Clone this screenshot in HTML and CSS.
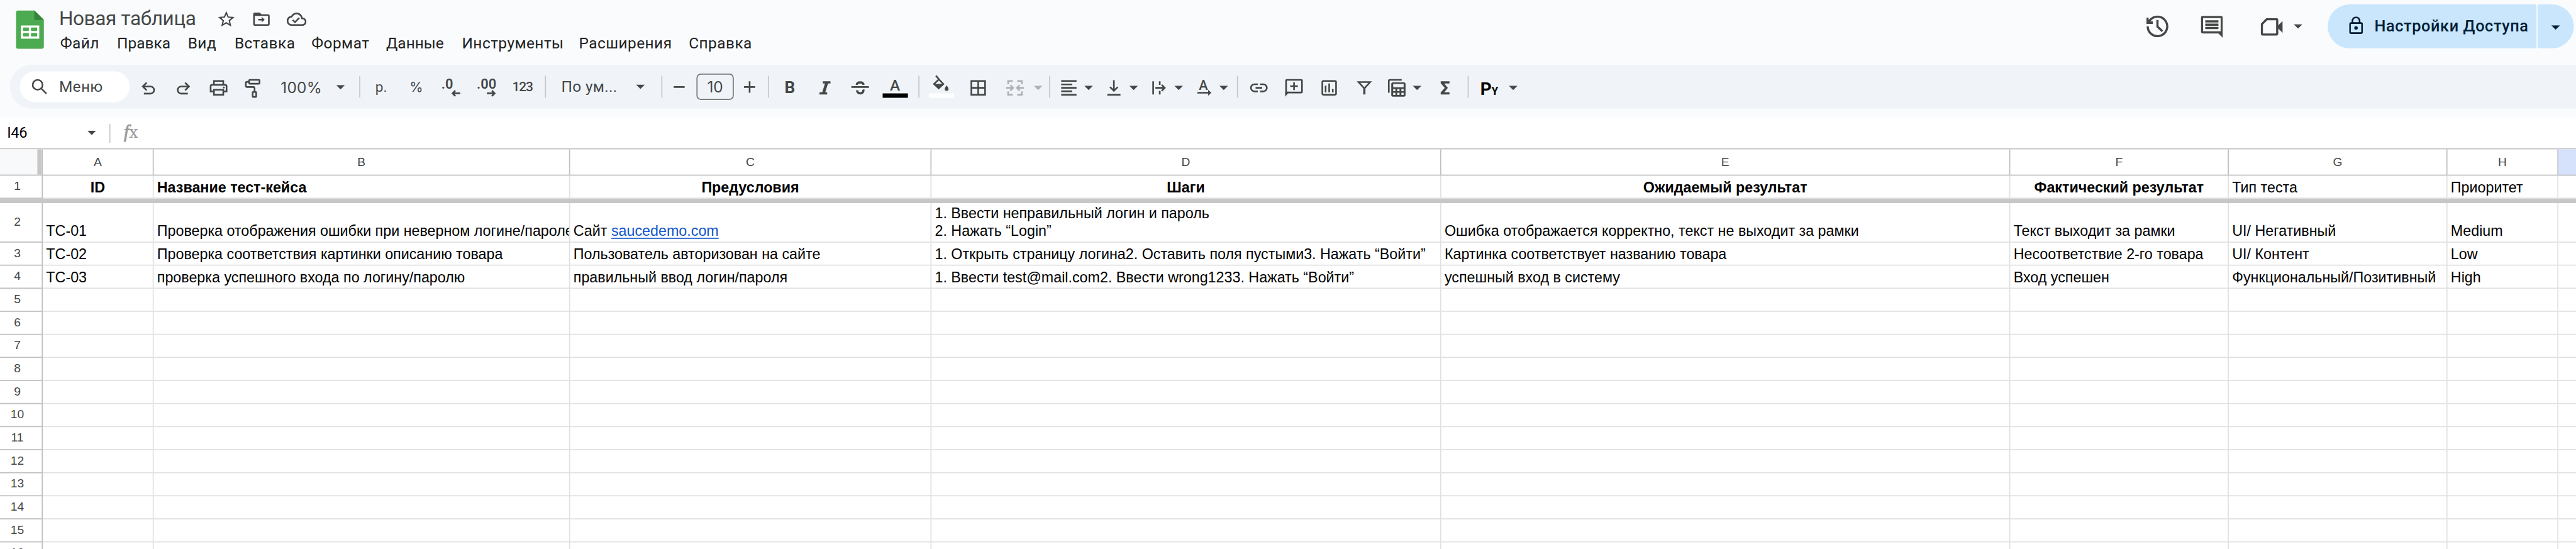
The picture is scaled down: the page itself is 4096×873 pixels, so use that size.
FILE: index.html
```html
<!DOCTYPE html>
<html lang="ru">
<head>
<meta charset="utf-8">
<title>Новая таблица</title>
<link rel="stylesheet" href="styles.css">
</head>
<body>
<div class="app">
  <header class="top">
    <svg class="logo" width="51" height="70" viewBox="0 0 51 70"><path fill="#4caa50" d="M4.500 0H33.500L51 17.500V65.500A4.500 4.500 0 0 1 46.500 70H4.500A4.500 4.500 0 0 1 0 65.500V4.500A4.500 4.500 0 0 1 4.500 0z"/><path fill="#37853b" d="M33.500 0L51 17.500H33.500z"/><path fill="#fff" fill-rule="evenodd" d="M9 27.500H42.500V51.500H9zM13 31V37.500H23.500V31zM27.500 31V37.500H38.500V31zM13 41V47.500H23.500V41zM27.500 41V47.500H38.500V41z"/></svg>
    <div class="heading">
      <div class="title-row">
        <h1 class="title">Новая таблица</h1>
        <svg class="star" width="36" height="36" viewBox="0 0 24 24"><path d="M22 9.240l-7.190-.62L12 2 9.190 8.630 2 9.240l5.460 4.730L5.820 21 12 17.270 18.180 21l-1.630-7.030L22 9.240zM12 15.400l-3.760 2.270 1-4.280-3.320-2.880 4.380-.38L12 6.100l1.710 4.040 4.380.38-3.320 2.880 1 4.280L12 15.400z"/></svg>
        <svg class="move" width="36" height="36" viewBox="0 0 24 24"><path d="M20 6h-8l-2-2H4C2.900 4 2 4.900 2 6v12c0 1.100.9 2 2 2h16c1.100 0 2-.9 2-2V8c0-1.100-.9-2-2-2zm0 12H4V8h16v10zM12.200 16l3.800-3.500L12.200 9v2.500H8.200v2h4z"/></svg>
        <svg class="cloud" width="36" height="36" viewBox="0 0 24 24"><path d="M19.350 10.040C18.670 6.590 15.640 4 12 4 9.110 4 6.610 5.640 5.350 8.040 2.340 8.360 0 10.910 0 14c0 3.310 2.690 6 6 6h13c2.760 0 5-2.240 5-5 0-2.640-2.050-4.780-4.650-4.960zM19 18H6c-2.210 0-4-1.790-4-4 0-2.050 1.530-3.760 3.560-3.970l1.070-.11.5-.95C8.080 7.140 9.940 6 12 6c2.620 0 4.880 1.860 5.390 4.430l.3 1.500 1.530.11c1.560.1 2.780 1.410 2.780 2.960 0 1.650-1.350 3-3 3zm-9-3.820l-2.090-2.090L6.500 13.500 10 17l6.010-6.010-1.410-1.410z"/></svg>
      </div>
      <nav class="menus"><span>Файл</span><span class="tight">Правка</span><span>Вид</span><span>Вставка</span><span>Формат</span><span class="tight">Данные</span><span>Инструменты</span><span>Расширения</span><span>Справка</span></nav>
    </div>
    <div class="actions">
      <svg class="history" width="40" height="40" viewBox="0 0 40 40"><path class="line" d="M2.200 20A17.800 17.800 0 1 0 6.500 8.500L3 12.500M20 8.500V20.500L29 29"/><path d="M0 4H4V11H11.500V15.500H0z"/></svg>
      <svg class="talk" width="40" height="40" viewBox="0 0 40 40"><path fill-rule="evenodd" d="M4 0H36A4 4 0 0 1 40 4V40L32 32H4A4 4 0 0 1 0 28V4A4 4 0 0 1 4 0zM4 4V28H36V4z"/><path d="M8 8H32V12H8zM8 14H32V18H8zM8 20H32V24H8z"/></svg>
      <svg class="camera" width="40" height="32" viewBox="0 0 40 32"><path class="line" d="M11 2H28A2 2 0 0 1 30 4V28A2 2 0 0 1 28 30H4A2 2 0 0 1 2 28V11z"/><path d="M31 14L40 5V27L31 18z"/></svg>
      <svg class="arrow" width="16" height="8" viewBox="0 0 16 8"><path d="M0 0H16L8 8z"/></svg>
      <div class="share">
        <div class="share-main">
          <svg width="25" height="32" viewBox="0 0 25 32"><path class="line" d="M6 11.500V8A6.500 6.500 0 0 1 19 8V11.500M3.500 12H21.500A2 2 0 0 1 23.500 14V28.300A2 2 0 0 1 21.500 30.300H3.500A2 2 0 0 1 1.500 28.300V14A2 2 0 0 1 3.500 12z"/><circle cx="12.500" cy="21" r="3.200"/></svg>
          <span>Настройки Доступа</span>
        </div>
        <div class="share-more"><svg width="16" height="8" viewBox="0 0 16 8"><path d="M0 0H16L8 8z"/></svg></div>
      </div>
    </div>
  </header>

  <div class="toolbar">
    <div class="search">
      <svg width="28" height="28" viewBox="0 0 28 28"><circle class="line" cx="10.500" cy="10.500" r="9"/><path class="line" d="M17 17L26.500 26.500"/></svg>
      <span>Меню</span>
    </div>
    <svg class="icon g10" viewBox="0 0 48 48"><path class="line" d="M21 14.500L14 21.500L21 28.500M14.500 21.500H28A6.500 6.500 0 0 1 28 34.500H16"/></svg>
    <svg class="icon g16" viewBox="0 0 48 48"><path class="line" d="M27 14.500L34 21.500L27 28.500M33.500 21.500H20A6.500 6.500 0 0 0 20 34.500H32"/></svg>
    <svg class="icon g16" viewBox="0 0 48 48"><path class="line" d="M15.500 18V11.500H32.500V18M15 30.500H9.500V21A3 3 0 0 1 12.500 18.500H35.500A3 3 0 0 1 38.500 21V30.500H33M15.500 27.500H32.500V36.500H15.500z"/><circle cx="33.500" cy="23.500" r="1.600"/></svg>
    <svg class="icon g16" viewBox="0 0 48 48"><rect class="line" x="15.500" y="9.500" width="19" height="7" rx="1.500"/><path class="line" d="M15 13H12A2.500 2.500 0 0 0 9.500 15.500V20A2.500 2.500 0 0 0 12 22.500H23A2.500 2.500 0 0 1 25.500 25V30"/><rect class="line" x="22" y="31.500" width="6.500" height="9" rx="1"/></svg>
    <span class="zoom-level">100%</span>
    <svg class="arrow zoom-arrow" width="16" height="8" viewBox="0 0 16 8"><path d="M0 0H16L8 8z"/></svg>
    <i class="rule g26"></i>
    <span class="glyph g14">р.</span>
    <span class="glyph percent g16">%</span>
    <svg class="icon g16" viewBox="0 0 48 48"><text class="num" x="5.500" y="26">.0</text><path class="line" d="M40 34H26.500M31 29L26 34L31 39"/></svg>
    <svg class="icon g16" viewBox="0 0 48 48"><text class="num" x="6" y="26">.00</text><path class="line" d="M24.500 34H38M33.500 29L38.500 34L33.500 39"/></svg>
    <span class="glyph digits g16">123</span>
    <i class="rule g16"></i>
    <span class="font-name">По ум...</span>
    <svg class="arrow font-arrow" width="16" height="8" viewBox="0 0 16 8"><path d="M0 0H16L8 8z"/></svg>
    <i class="rule g30"></i>
    <svg class="icon g7" viewBox="0 0 48 48"><path class="line" d="M13.500 22.500H33.500"/></svg>
    <span class="size-box">10</span>
    <svg class="icon g5" viewBox="0 0 48 48"><path class="line" d="M13.500 22.500H34M23.800 12V33"/></svg>
    <i class="rule g9"></i>
    <span class="glyph bold g14">B</span>
    <svg class="icon g16" viewBox="0 0 48 48"><path d="M20 12H34V16H29.500L24.500 32H28V36H14V32H19L24 16H20z"/></svg>
    <svg class="icon g16" viewBox="0 0 48 48"><path class="line thick" d="M17.800 18.500C18 15.500 20.500 14 24 14S30 15.500 30.200 18.500M18.500 28.500C18.500 32 20.500 34 24.500 34S30 31.500 30 28.500C30 28 29.900 27.500 29.700 27"/><path d="M8 20.800H40V24.200H8z"/></svg>
    <svg class="icon g16" viewBox="0 0 48 48"><text class="letter" x="23.500" y="29">A</text><path fill="#000" d="M1 34H47V42H1z"/></svg>
    <i class="rule g18"></i>
    <svg class="icon g16" viewBox="0 0 48 48"><path class="line" d="M14 2L20.500 9.500L27.500 17L19 25L10.500 17L19.500 8.500"/><path d="M10 17H28L19 26.500zM33.500 19.500C35.500 22.500 37 24.500 37 26A3.500 3.500 0 0 1 30 26C30 24.500 31.500 22.500 33.500 19.500z"/><path fill="#fff" d="M1 34H47V42H1z"/></svg>
    <svg class="icon g19" viewBox="0 0 48 48"><path class="line" d="M11.500 11.500H36.500V36.500H11.500zM24 11.500V36.500M11.500 24H36.500"/></svg>
    <svg class="icon g19 off" viewBox="0 0 48 48"><path class="line" d="M20 11.500H11.500V17.500M28 11.500H36.500V17.500M20 36.500H11.500V30.500M28 36.500H36.500V30.500M8 24H19.500M15.500 19L20.500 24L15.500 29M40 24H28.500M32.500 19L27.500 24L32.500 29"/></svg>
    <svg class="arrow g10 off" width="16" height="8" viewBox="0 0 16 8"><path d="M0 0H16L8 8z"/></svg>
    <i class="rule g12"></i>
    <svg class="icon g10" viewBox="0 0 48 48"><path class="line" d="M10 11.500H38M10 17.800H30M10 24H38M10 30.200H30M10 36.500H38"/></svg>
    <svg class="arrow g4" width="16" height="8" viewBox="0 0 16 8"><path d="M0 0H16L8 8z"/></svg>
    <svg class="icon g14" viewBox="0 0 48 48"><path class="line" d="M12 36.500H36M24 10V29M17 22.500L24 29.500L31 22.500"/></svg>
    <svg class="arrow g4" width="16" height="8" viewBox="0 0 16 8"><path d="M0 0H16L8 8z"/></svg>
    <svg class="icon g14" viewBox="0 0 48 48"><path class="line" d="M13.500 12V36M25.500 12V18.500M25.500 29.500V36M17.500 24H33M29 18.500L34.500 24L29 29.500"/></svg>
    <svg class="arrow g4" width="16" height="8" viewBox="0 0 16 8"><path d="M0 0H16L8 8z"/></svg>
    <svg class="icon g14" viewBox="0 0 48 48"><text class="letter light" x="23" y="28">A</text><path class="line" d="M12 33H35"/><path d="M31.500 27.500L37.500 33L31.500 38.500z"/></svg>
    <svg class="arrow g4" width="16" height="8" viewBox="0 0 16 8"><path d="M0 0H16L8 8z"/></svg>
    <i class="rule g16"></i>
    <svg class="icon g14" viewBox="0 0 48 48"><path class="line" d="M22 17.500H16A6.500 6.500 0 0 0 16 30.500H22M26 17.500H32A6.500 6.500 0 0 1 32 30.500H26M18 24H30"/></svg>
    <svg class="icon g16" viewBox="0 0 48 48"><path class="line" d="M9.500 36V11A1.500 1.500 0 0 1 11 9.500H37A1.500 1.500 0 0 1 38.500 11V31A1.500 1.500 0 0 1 37 32.500H12M24 14V28M17 21H31"/><path d="M8 40V31H15.500z"/></svg>
    <svg class="icon g16" viewBox="0 0 48 48"><rect class="line" x="11.500" y="11.500" width="25" height="25" rx="2"/><path class="line" d="M17.500 20V32M24 16V32M30.500 26V32"/></svg>
    <svg class="icon g16" viewBox="0 0 48 48"><path class="line" d="M13.500 13.500H34.500L24 25z"/><path d="M22 24H26V36H22z"/></svg>
    <svg class="icon g12" viewBox="0 0 48 48"><path class="line" d="M8.500 33V11.500A2 2 0 0 1 10.500 9.500H32"/><path fill-rule="evenodd" d="M16 14H36A3 3 0 0 1 39 17V37A3 3 0 0 1 36 40H16A3 3 0 0 1 13 37V17A3 3 0 0 1 16 14zM16.500 17V23H35.500V17zM16.500 26V30H20.500V26zM24 26V30H28V26zM31.500 26V30H35.500V26zM16.500 33V37H20.500V33zM24 33V37H28V33zM31.500 33V37H35.500V33z"/></svg>
    <svg class="arrow g4" width="16" height="8" viewBox="0 0 16 8"><path d="M0 0H16L8 8z"/></svg>
    <svg class="icon g19" viewBox="0 0 48 48"><path d="M16 12H32V16H22.500L29 24L22.500 32H32V36H16V32.500L23.500 24L16 15.500z"/></svg>
    <i class="rule g17"></i>
    <svg class="icon g15" viewBox="0 0 48 48"><text class="py" x="6" y="37">P</text><text class="py small" x="26.500" y="37">Y</text></svg>
    <svg class="arrow g10" width="16" height="8" viewBox="0 0 16 8"><path d="M0 0H16L8 8z"/></svg>
  </div>

  <div class="formula">
    <span class="cell-name">I46</span>
    <svg class="arrow" width="16" height="8" viewBox="0 0 16 8"><path d="M0 0H16L8 8z"/></svg>
    <i class="rule"></i>
    <span class="fx"><em>f</em>x</span>
  </div>

  <main class="sheet">
    <div class="row columns"><div class="corner"></div><div>A</div><div>B</div><div>C</div><div>D</div><div>E</div><div>F</div><div>G</div><div>H</div><div class="active"></div></div>
    <div class="row heads"><div class="no">1</div><div class="mid">ID</div><div class="strong">Название тест-кейса</div><div class="mid">Предусловия</div><div class="mid">Шаги</div><div class="mid">Ожидаемый результат</div><div class="mid">Фактический результат</div><div>Тип теста</div><div>Приоритет</div><div></div></div>
    <div class="freeze"></div>
    <div class="row tall"><div class="no">2</div><div>TC-01</div><div>Проверка отображения ошибки при неверном логине/пароле</div><div><span>Сайт <a class="link">saucedemo.com</a></span></div><div>1. Ввести неправильный логин и пароль<br>2. Нажать “Login”</div><div>Ошибка отображается корректно, текст не выходит за рамки</div><div>Текст выходит за рамки</div><div>UI/ Негативный</div><div>Medium</div><div></div></div>
    <div class="row"><div class="no">3</div><div>TC-02</div><div>Проверка соответствия картинки описанию товара</div><div>Пользователь авторизован на сайте</div><div>1. Открыть страницу логина2. Оставить поля пустыми3. Нажать “Войти”</div><div>Картинка соответствует названию товара</div><div>Несоответствие 2-го товара</div><div>UI/ Контент</div><div>Low</div><div></div></div>
    <div class="row"><div class="no">4</div><div>TC-03</div><div>проверка успешного входа по логину/паролю</div><div>правильный ввод логин/пароля</div><div>1. Ввести test@mail.com2. Ввести wrong1233. Нажать “Войти”</div><div>успешный вход в систему</div><div>Вход успешен</div><div>Функциональный/Позитивный</div><div>High</div><div></div></div>
    <div class="row"><div class="no">5</div><div></div><div></div><div></div><div></div><div></div><div></div><div></div><div></div><div></div></div>
    <div class="row"><div class="no">6</div><div></div><div></div><div></div><div></div><div></div><div></div><div></div><div></div><div></div></div>
    <div class="row"><div class="no">7</div><div></div><div></div><div></div><div></div><div></div><div></div><div></div><div></div><div></div></div>
    <div class="row"><div class="no">8</div><div></div><div></div><div></div><div></div><div></div><div></div><div></div><div></div><div></div></div>
    <div class="row"><div class="no">9</div><div></div><div></div><div></div><div></div><div></div><div></div><div></div><div></div><div></div></div>
    <div class="row"><div class="no">10</div><div></div><div></div><div></div><div></div><div></div><div></div><div></div><div></div><div></div></div>
    <div class="row"><div class="no">11</div><div></div><div></div><div></div><div></div><div></div><div></div><div></div><div></div><div></div></div>
    <div class="row"><div class="no">12</div><div></div><div></div><div></div><div></div><div></div><div></div><div></div><div></div><div></div></div>
    <div class="row"><div class="no">13</div><div></div><div></div><div></div><div></div><div></div><div></div><div></div><div></div><div></div></div>
    <div class="row"><div class="no">14</div><div></div><div></div><div></div><div></div><div></div><div></div><div></div><div></div><div></div></div>
    <div class="row"><div class="no">15</div><div></div><div></div><div></div><div></div><div></div><div></div><div></div><div></div><div></div></div>
    <div class="row last"><div class="no">16</div><div></div><div></div><div></div><div></div><div></div><div></div><div></div><div></div><div></div></div>
  </main>
</div>
</body>
</html>
```
FILE: styles.css
```css
* { box-sizing: border-box; }
html, body { margin: 0; width: 4096px; height: 873px; overflow: hidden; background: #fff; }
.app {
  width: 4690px; height: 1000px; overflow: hidden;
  display: flex; flex-direction: column;
  transform: scale(.873347, .873); transform-origin: 0 0;
  background: linear-gradient(#f9fbfd 214px, #fff 214px);
  font-family: Roboto, "Liberation Sans", sans-serif;
  color: #444746;
}
svg { display: block; flex: none; fill: currentColor; }
.line { fill: none; stroke: currentColor; stroke-width: 3; }
.line.thick { stroke-width: 4; }

/* header */
.top { height: 118px; display: flex; flex: none; }
.logo { margin: 19px 0 0 28.500px; }
.heading { margin-left: 28px; padding-top: 12px; }
.title-row { display: flex; height: 44px; }
.title { margin: 0; width: 286.500px; font-size: 36px; line-height: 44px; font-weight: 400; letter-spacing: -.38px; white-space: nowrap; }
.title-row svg { margin-top: 5px; }
.move, .cloud { margin-left: 28px; }
.menus {
  display: grid; margin-top: 5px; padding-left: 2px;
  grid-template-columns: 103.500px 129px 85px 140px 136px 138px 213px 200px 130px;
  font-size: 28px; line-height: 36px; letter-spacing: .5px; color: #1f1f1f; white-space: nowrap;
}
.menus .tight { letter-spacing: 0; }
.actions { margin-left: auto; padding-right: 4px; display: flex; align-items: flex-start; }
.history { margin-top: 28px; }
.history .line, .talk .line, .camera .line { stroke-width: 4; }
.talk { margin: 29px 0 0 59px; }
.camera { margin: 33px 0 0 69px; }
.actions > .arrow { margin: 44px 46px 0 20px; }
.share { display: flex; gap: 2px; margin-top: 8px; height: 80px; color: #001d35; }
.share-main, .share-more { display: flex; align-items: center; background: #c9e6fd; }
.share-main { width: 380px; padding-left: 39px; border-radius: 40px 3px 3px 40px; font-size: 29px; font-weight: 500; letter-spacing: .67px; white-space: nowrap; }
.share-main span { margin-left: 21px; margin-top: -2px; }
.share-main svg { margin-top: -4px; }
.share-more { width: 66px; padding-left: 25px; border-radius: 3px 40px 40px 3px; }
.share-more svg { margin-top: 4px; }

/* toolbar */
.toolbar { height: 80px; flex: none; margin-left: 18px; padding-left: 18px; display: flex; align-items: center; background: #f0f4f9; border-radius: 40px 0 0 40px; font-size: 28px; white-space: nowrap; }
.search { width: 200px; height: 56px; padding-left: 22px; display: flex; align-items: center; background: #fff; border-radius: 28px; letter-spacing: .39px; }
.search span { margin: -2px 0 0 21.500px; }
.icon { width: 48px; height: 48px; margin-top: 4px; }
.arrow { flex: none; }
.toolbar .arrow { margin-top: 4px; }
.toolbar .zoom-arrow { margin-top: 2px; }
.toolbar .font-arrow { margin-top: 0; }
.rule { width: 2px; height: 40px; flex: none; background: #c7c7c7; }
.zoom-level { width: 101px; margin: 4px 0 0 25px; font: 28px Inter, sans-serif; letter-spacing: .26px; }
.glyph { width: 48px; text-align: center; font-size: 26px; flex: none; }
.percent { font-family: Inter, sans-serif; font-size: 25px; }
.digits { width: 50px; font-size: 24px; font-weight: 500; letter-spacing: -1.300px; }
.font-name { width: 136px; margin: -2px 0 0 28px; letter-spacing: .33px; }
.size-box { width: 68px; height: 48px; margin-left: 7px; border: 2px solid #747775; border-radius: 8px; text-align: center; font: 28px/44px Inter, sans-serif; }
.bold { font-size: 30px; font-weight: 700; margin-top: 3px; }
.num { font-size: 25px; font-weight: 600; }
.letter { font-size: 28px; font-weight: 500; text-anchor: middle; }
.letter.light { font-size: 25px; }
.py { font-size: 32px; font-weight: 700; fill: #000; }
.py.small { font-size: 20px; }
.off { opacity: .38; }
.g4 { margin-left: 4px; } .g5 { margin-left: 5px; } .g7 { margin-left: 7px; } .g9 { margin-left: 9px; }
.g10 { margin-left: 10px; } .g12 { margin-left: 12px; } .g14 { margin-left: 14px; } .g15 { margin-left: 15px; }
.g16 { margin-left: 16px; } .g17 { margin-left: 17px; } .g18 { margin-left: 18px; } .g19 { margin-left: 19px; }
.g26 { margin-left: 26px; } .g30 { margin-left: 30px; }

/* name box and formula bar */
.formula { height: 56px; margin-top: 16px; flex: none; display: flex; align-items: center; }
.cell-name { width: 158.500px; padding-left: 13px; font-size: 27px; letter-spacing: -.5px; color: #000; }
.formula .rule { height: 34px; margin: 2px 0 0 24px; }
.fx { margin: -3px 0 0 25px; font: 30px/36px "DejaVu Serif", serif; color: #999; }
.fx em { font: italic 33px/36px "Liberation Serif", serif; -webkit-text-stroke: 1px #999; }

/* grid */
.sheet { flex: none; border-top: 2px solid #c0c0c0; font: 26.670px/32px "Liberation Sans", Arial, sans-serif; color: #000; }
.row { display: grid; height: 42px; grid-template-columns: 78px 202px 758px 658px 928px 1036px 398px 398px 202px 32px; white-space: nowrap; }
.row > div { border-right: 2px solid #e1e1e1; border-bottom: 2px solid #e1e1e1; padding: 0 0 3px 6px; overflow: hidden; display: flex; flex-direction: column; justify-content: flex-end; }
.row > div:last-child { border-right: 0; }
.row > .no, .columns > div.corner { border-color: #c0c0c0; }
.row > .no { padding: 0 13px 2px 0; justify-content: center; text-align: center; font-size: 22px; line-height: 26px; color: #444746; }
.row > div.mid { padding-left: 0; text-align: center; font-weight: 700; }
.row > .strong { font-weight: 700; }
.columns { height: 48px; }
.row.columns > div { border-color: #c0c0c0; padding: 0 0 1px; justify-content: center; text-align: center; font-size: 22px; color: #444746; }
.row.columns > .corner { background: #f8f9fb; box-shadow: inset -8px 0 #c7c7c7; }
.row.columns > .active { background: #d6e2fb; }
.heads > .no { border-bottom-color: #c7c7c7; }
.freeze { height: 8px; background: #c7c7c7; }
.tall { height: 72px; }
.last { height: 12px; }
.row.last > div { border-bottom: 0; padding-bottom: 0; }
.row.last > .no { justify-content: flex-start; padding-top: 6px; }
.link { color: #1155cc; text-decoration: underline; text-decoration-thickness: 2px; text-underline-offset: 3px; }
```
